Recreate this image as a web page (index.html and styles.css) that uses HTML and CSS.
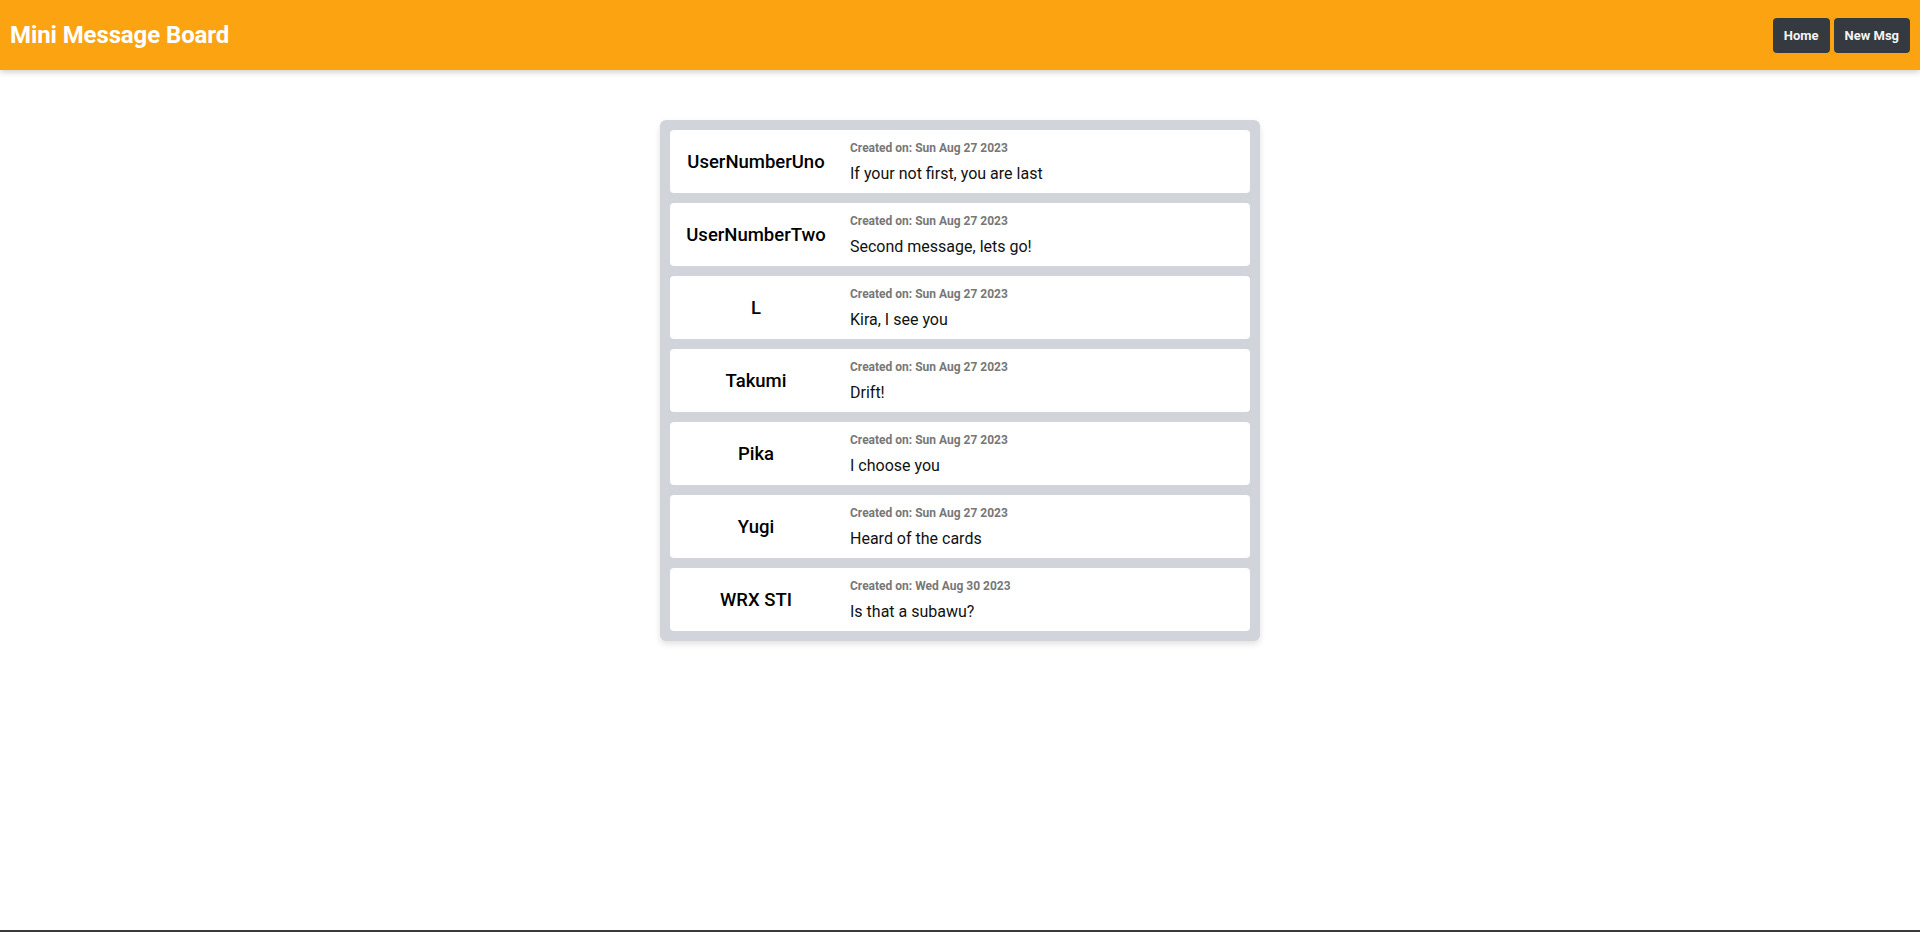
FILE: index.html
```html
<!DOCTYPE html>
<html lang="en">
<head>
<meta charset="utf-8">
<title>Mini Message Board</title>
<link rel="stylesheet" href="styles.css">
</head>
<body>
<div class="page">
  <header class="topbar">
    <h1 class="brand">Mini Message Board</h1>
    <nav class="nav">
      <a class="btn" href="#">Home</a>
      <a class="btn" href="#">New Msg</a>
    </nav>
  </header>
  <main class="main">
    <section class="board">
      <article class="msg">
        <div class="user">UserNumberUno</div>
        <div class="body"><div class="date">Created on: Sun Aug 27 2023</div><div class="text">If your not first, you are last</div></div>
      </article>
      <article class="msg">
        <div class="user">UserNumberTwo</div>
        <div class="body"><div class="date">Created on: Sun Aug 27 2023</div><div class="text">Second message, lets go!</div></div>
      </article>
      <article class="msg">
        <div class="user">L</div>
        <div class="body"><div class="date">Created on: Sun Aug 27 2023</div><div class="text">Kira, I see you</div></div>
      </article>
      <article class="msg">
        <div class="user">Takumi</div>
        <div class="body"><div class="date">Created on: Sun Aug 27 2023</div><div class="text">Drift!</div></div>
      </article>
      <article class="msg">
        <div class="user">Pika</div>
        <div class="body"><div class="date">Created on: Sun Aug 27 2023</div><div class="text">I choose you</div></div>
      </article>
      <article class="msg">
        <div class="user">Yugi</div>
        <div class="body"><div class="date">Created on: Sun Aug 27 2023</div><div class="text">Heard of the cards</div></div>
      </article>
      <article class="msg">
        <div class="user">WRX STI</div>
        <div class="body"><div class="date">Created on: Wed Aug 30 2023</div><div class="text">Is that a subawu?</div></div>
      </article>
    </section>
  </main>
  <footer class="footer"></footer>
</div>
</body>
</html>
```
FILE: styles.css
```css
* { box-sizing: border-box; }
html, body { margin: 0; padding: 0; }
body {
  font-family: Roboto, "Liberation Sans", Arial, sans-serif;
  background: #ffffff;
  color: #111111;
}
.page {
  min-height: 100vh;
  display: flex;
  flex-direction: column;
}
.topbar {
  height: 70px;
  background: #fca311;
  display: flex;
  align-items: center;
  justify-content: space-between;
  padding: 0 10px;
  box-shadow: 0 2px 6px rgba(0, 0, 0, 0.2);
}
.brand {
  margin: 0;
  color: #ffffff;
  font-size: 24px;
  font-weight: 700;
  line-height: 32px;
  letter-spacing: -0.1px;
}
.nav {
  display: flex;
  gap: 4px;
}
.btn {
  display: flex;
  align-items: center;
  height: 35px;
  padding: 0 11px;
  background: #343a40;
  color: #f4f4f4;
  font-size: 13px;
  font-weight: 700;
  text-decoration: none;
  border-radius: 4px;
}
.main {
  flex: 1;
  display: flex;
  justify-content: center;
  padding-top: 50px;
}
.board {
  width: 600px;
  align-self: flex-start;
  background: #d1d5db;
  border-radius: 6px;
  padding: 10px;
  display: flex;
  flex-direction: column;
  gap: 10px;
  box-shadow: 0 3px 6px rgba(0, 0, 0, 0.12);
}
.msg {
  background: #ffffff;
  border-radius: 4px;
  height: 63px;
  display: flex;
  align-items: center;
}
.user {
  width: 172px;
  text-align: center;
  font-size: 18.5px;
  font-weight: 500;
  color: #000000;
}
.body {
  padding-left: 8px;
  padding-top: 2px;
  display: flex;
  flex-direction: column;
  gap: 6px;
}
.date {
  font-size: 12px;
  line-height: 16px;
  font-weight: 700;
  color: #777777;
}
.text {
  font-size: 16px;
  line-height: 24px;
  color: #111111;
}
.footer {
  height: 2px;
  background: #3a3a3a;
}
```
